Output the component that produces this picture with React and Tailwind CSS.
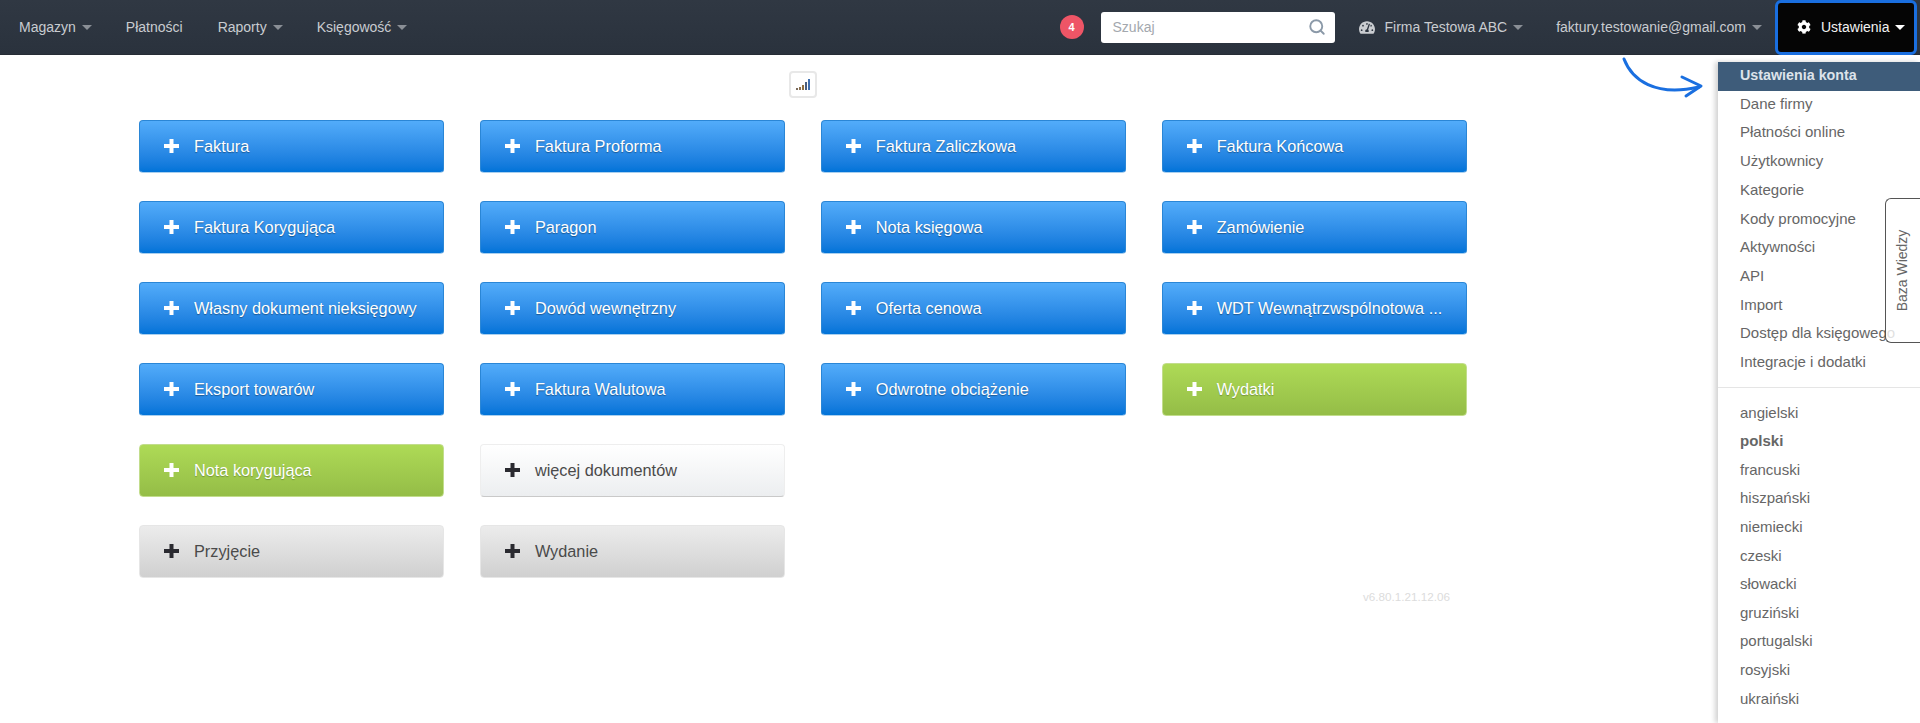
import React from "react";
import { FaCog, FaTachometerAlt } from "react-icons/fa";
import { Search } from "lucide-react";

const font = "font-['Liberation_Sans',Arial,sans-serif]";

const styles = {
  blue: "bg-gradient-to-b from-[#52acfa] to-[#0073d8] border border-[#2a86d6] border-b-[#a9cfee] text-white [text-shadow:0_1px_1px_rgba(0,0,0,0.35)]",
  green: "bg-gradient-to-b from-[#aeda56] to-[#94bd47] border border-[#c2dd8c] text-white [text-shadow:0_1px_1px_rgba(0,0,0,0.25)]",
  white: "bg-gradient-to-b from-[#ffffff] to-[#eceef0] border border-[#eeeeee] border-b-[#c9c9c9] text-[#4a4a4a]",
  gray: "bg-gradient-to-b from-[#ececec] to-[#d0d0d0] border border-[#e6e6e6] text-[#4a4a4a]",
};

const plusColor = { blue: "text-white", green: "text-white", white: "text-[#2a2a30]", gray: "text-[#2a2a30]" };

const buttons = [
  ["Faktura", "blue"], ["Faktura Proforma", "blue"], ["Faktura Zaliczkowa", "blue"], ["Faktura Końcowa", "blue"],
  ["Faktura Korygująca", "blue"], ["Paragon", "blue"], ["Nota księgowa", "blue"], ["Zamówienie", "blue"],
  ["Własny dokument nieksięgowy", "blue"], ["Dowód wewnętrzny", "blue"], ["Oferta cenowa", "blue"], ["WDT Wewnątrzwspólnotowa ...", "blue"],
  ["Eksport towarów", "blue"], ["Faktura Walutowa", "blue"], ["Odwrotne obciążenie", "blue"], ["Wydatki", "green"],
  ["Nota korygująca", "green"], ["więcej dokumentów", "white"], null, null,
  ["Przyjęcie", "gray"], ["Wydanie", "gray"],
];

const settings = ["Ustawienia konta", "Dane firmy", "Płatności online", "Użytkownicy", "Kategorie", "Kody promocyjne", "Aktywności", "API", "Import", "Dostęp dla księgowego", "Integracje i dodatki"];
const langs = ["angielski", "polski", "francuski", "hiszpański", "niemiecki", "czeski", "słowacki", "gruziński", "portugalski", "rosyjski", "ukraiński"];

function Caret({ className = "border-t-[#8a8f96]" }) {
  return <span className={`inline-block w-0 h-0 border-x-[5px] border-x-transparent border-t-[5px] ${className}`} />;
}

function NavItem({ label, caret, className = "" }) {
  return (
    <a className={`flex items-center gap-[6px] text-[14px] text-[#c9ccd0] ${className}`}>
      {label}
      {caret && <Caret />}
    </a>
  );
}

function Plus({ className }) {
  return (
    <svg className={`-mt-[2px] shrink-0 ${className}`} width="15" height="14" viewBox="0 0 15 14" fill="currentColor">
      <path d="M5.5 0 H9.5 V5 H15 V9 H9.5 V14 H5.5 V9 H0 V5 H5.5 Z" />
    </svg>
  );
}

function DocButton({ label, kind }) {
  return (
    <button className={`flex h-[53px] items-center gap-[15px] rounded-[4px] pl-[24px] text-[16.3px] ${styles[kind]}`}>
      <Plus className={plusColor[kind]} />
      <span>{label}</span>
    </button>
  );
}

export default function App() {
  return (
    <div className={`relative h-[723px] w-full overflow-hidden bg-white ${font}`}>
      <nav className="flex h-[55px] items-center bg-gradient-to-b from-[#303843] to-[#2a323d] border-b border-[#262c35]">
        <NavItem label="Magazyn" caret className="ml-[19px]" />
        <NavItem label="Płatności" className="ml-[34px]" />
        <NavItem label="Raporty" caret className="ml-[35px]" />
        <NavItem label="Księgowość" caret className="ml-[34px]" />

        <span className="ml-auto flex h-[24px] w-[24px] items-center justify-center rounded-full bg-[#ee5566] text-[11px] font-bold text-white">4</span>
        <div className="ml-[17px] flex h-[31px] w-[234px] items-center justify-between rounded-[3px] bg-white pl-[12px] pr-[9px]">
          <span className="text-[14px] text-[#a3a8ae]">Szukaj</span>
          <Search className="h-[18px] w-[18px] text-[#8b99a8]" strokeWidth={2.5} />
        </div>
        <FaTachometerAlt className="ml-[24px] h-[15px] w-[16px] text-[#c9ccd0]" />
        <NavItem label="Firma Testowa ABC" caret className="ml-[10px]" />
        <NavItem label="faktury.testowanie@gmail.com" caret className="ml-[33px]" />
        <button className="ml-[13px] mr-[3px] flex h-[55px] w-[142px] items-center rounded-[6px] border-[3px] border-[#1a6fe0] bg-[#050505] pl-[19px] text-[14px] text-[#f2f2f2]">
          <FaCog className="h-[14px] w-[14px] text-white" />
          <span className="ml-[10px]">Ustawienia</span>
          <Caret className="ml-[6px] border-t-white" />
        </button>
      </nav>

      <main className="ml-[139px] w-[1328px]">
        <div className="flex justify-center pt-[16px] pb-[22px]">
          <div className="flex h-[27px] w-[28px] items-end justify-center rounded-[4px] border-2 border-[#e8e8e8] pb-[6px]">
            <svg width="16" height="12" viewBox="0 0 16 12">
              <rect x="1" y="10" width="2" height="2" fill="#7a6a5a" />
              <rect x="4" y="9" width="2" height="3" fill="#8a6f4f" />
              <rect x="7" y="7" width="2" height="5" fill="#907040" />
              <rect x="10" y="4" width="2" height="8" fill="#4a5f7f" />
              <rect x="13" y="1" width="2" height="11" fill="#3f6fb0" />
            </svg>
          </div>
        </div>

        <div className="grid grid-cols-4 gap-x-[35.5px] gap-y-[28px]">
          {buttons.map((b, i) => (b ? <DocButton key={i} label={b[0]} kind={b[1]} /> : <div key={i} />))}
        </div>

        <p className="mt-[11px] pr-[17px] text-right text-[11.7px] leading-[16px] text-[#dcdcdc]">v6.80.1.21.12.06</p>
      </main>

      <ul className="absolute right-0 top-[62px] h-[661px] w-[202px] bg-white text-[15px] text-[#666] shadow-[-3px_0_5px_rgba(0,0,0,0.18)]">
        {settings.map((s, i) => (
          <li key={s} className={`flex h-[28.7px] items-center pb-[2px] pl-[22px] ${i === 0 ? "bg-[#3e5c7a] text-[14.3px] font-bold text-[#dde3ea]" : ""}`}>{s}</li>
        ))}
        <li className="mb-[11px] mt-[9px] border-t border-[#e5e5e5]" />
        {langs.map((s) => (
          <li key={s} className={`flex h-[28.6px] items-center pl-[22px] ${s === "polski" ? "font-bold" : ""}`}>{s}</li>
        ))}
      </ul>

      <div className="absolute right-0 top-[198px] flex h-[145px] w-[35px] items-center justify-center rounded-l-[6px] border border-r-0 border-[#555] bg-white/80 text-[14px] text-[#666]">
        <span className="-rotate-90 whitespace-nowrap">Baza Wiedzy</span>
      </div>

      <svg className="absolute left-[1620px] top-[55px]" width="90" height="45" viewBox="1620 55 90 45" fill="none">
        <path d="M1624 59 C1632 80 1655 97 1699 87" stroke="#1a6fe0" strokeWidth="3" strokeLinecap="round" />
        <path d="M1682 77 L1701 86 L1686 96" stroke="#1a6fe0" strokeWidth="3" strokeLinecap="round" strokeLinejoin="round" />
      </svg>
    </div>
  );
}
